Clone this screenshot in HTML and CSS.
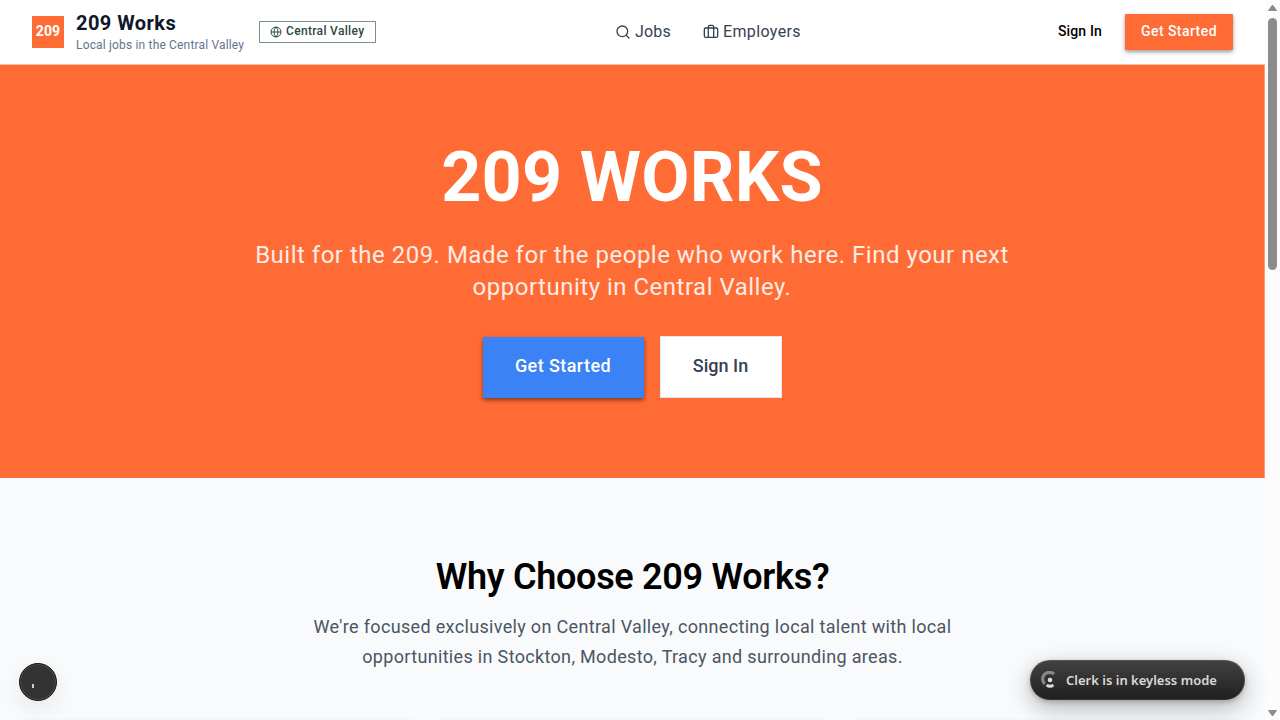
FILE: index.html
```html
<!DOCTYPE html>
<html lang="en">
<head>
<meta charset="utf-8">
<title>209 Works</title>
<link rel="stylesheet" href="styles.css">
</head>
<body>
<div class="page">
  <header class="header">
    <div class="brand">
      <div class="logo">209</div>
      <div class="brand-text">
        <div class="brand-name">209 Works</div>
        <div class="tagline">Local jobs in the Central Valley</div>
      </div>
      <div class="region">
        <svg width="12" height="12" viewBox="0 0 24 24" fill="none" stroke="currentColor" stroke-width="2"><circle cx="12" cy="12" r="10"/><path d="M12 2a14.5 14.5 0 0 0 0 20 14.5 14.5 0 0 0 0-20M2 12h20"/></svg>
        <span>Central Valley</span>
      </div>
    </div>
    <nav class="nav">
      <a class="nav-link jobs"><svg width="16" height="16" viewBox="0 0 24 24" fill="none" stroke="currentColor" stroke-width="2" stroke-linecap="round"><circle cx="11" cy="11" r="8"/><path d="m21 21-4.3-4.3"/></svg><span>Jobs</span></a>
      <a class="nav-link"><svg width="16" height="16" viewBox="0 0 24 24" fill="none" stroke="currentColor" stroke-width="2" stroke-linecap="round" stroke-linejoin="round"><path d="M16 20V4a2 2 0 0 0-2-2h-4a2 2 0 0 0-2 2v16"/><rect width="20" height="14" x="2" y="6" rx="2"/></svg><span>Employers</span></a>
    </nav>
    <div class="actions">
      <a class="sign-in">Sign In</a>
      <a class="start">Get Started</a>
    </div>
  </header>
  <section class="hero">
    <h1>209 WORKS</h1>
    <p>Built for the 209. Made for the people who work here. Find your next opportunity in Central Valley.</p>
    <div class="hero-actions">
      <a class="hero-start">Get Started</a>
      <a class="hero-sign">Sign In</a>
    </div>
  </section>
  <section class="why">
    <h2>Why Choose 209 Works?</h2>
    <p>We're focused exclusively on Central Valley, connecting local talent with local opportunities in Stockton, Modesto, Tracy and surrounding areas.</p>
    <div class="cards"><div class="card"></div><div class="card"></div><div class="card"></div></div>
  </section>
</div>
<div class="scrollbar">
  <svg width="11" height="8" viewBox="0 0 11 8"><path d="M5.5 1 9.5 6.5h-8z" fill="#8b8b8b" stroke="#8b8b8b" stroke-linejoin="round"/></svg>
  <div class="thumb"></div>
  <svg class="down" width="11" height="8" viewBox="0 0 11 8"><path d="M5.5 7 1.5 1.5h8z" fill="#8b8b8b" stroke="#8b8b8b" stroke-linejoin="round"/></svg>
</div>
<div class="devtool"><i class="tick"></i></div>
<div class="clerk">
  <svg width="16" height="18" viewBox="0 0 16 18"><path d="M13 3.1A6.3 6.3 0 0 0 3.8 13" fill="none" stroke="#888" stroke-width="3.2"/><circle cx="9" cy="9" r="2.3" fill="#ddd"/><path d="M4.7 14.9 6.5 13.1q2.5 1.5 5 0l1.8 1.8q-4.3 3.7-8.6 0z" fill="#ddd"/></svg>
  <span>Clerk is in keyless mode</span>
</div>
</body>
</html>
```
FILE: styles.css
```css
* { box-sizing: border-box; }
body { margin: 0; height: 720px; display: flex; overflow: hidden; font-family: Roboto, sans-serif; background: #f9fafb; }
h1, h2, p { margin: 0; }
svg { display: block; flex: none; }
.page { width: 1265px; height: 720px; overflow: hidden; }
.header { height: 65px; padding: 0 32px; display: flex; justify-content: space-between; background: #fff; border-bottom: 1px solid #ffc1aa; }
.brand { display: flex; align-items: center; white-space: nowrap; }
.logo { width: 32px; height: 32px; background: #ff6b35; color: #fff; font-size: 14px; font-weight: 700; line-height: 31px; text-align: center; letter-spacing: .15px; }
.brand-text { width: 168px; margin-left: 12px; padding-bottom: 1px; }
.brand-name { font-size: 20px; font-weight: 700; line-height: 24px; letter-spacing: .45px; color: #0f172a; }
.tagline { font-size: 12px; line-height: 16px; margin-top: 2px; letter-spacing: .17px; color: #64748b; }
.region { margin-left: 15px; width: 117px; height: 22px; padding-left: 10px; display: flex; align-items: center; gap: 4px; border: 1px solid #7b918c; color: #2d4a3e; font-size: 12px; font-weight: 500; letter-spacing: .33px; }
.region span { padding-bottom: 2px; }
.nav { display: flex; align-items: center; gap: 32px; padding-right: 18px; color: #374151; font-size: 16px; letter-spacing: .38px; }
.nav-link { display: flex; align-items: center; gap: 4px; }
.jobs { letter-spacing: .2px; }
.nav-link span { padding-bottom: 1px; }
.actions { display: flex; align-items: center; justify-content: flex-end; gap: 23px; padding-bottom: 1px; font-size: 14px; font-weight: 500; }
.sign-in { letter-spacing: .15px; padding-bottom: 1px; color: #000; }
.start { width: 108px; height: 36px; line-height: 34px; text-align: center; background: #ff6b35; color: #fff; letter-spacing: .43px; border-radius: 1px; box-shadow: 0 2px 4px rgba(0,0,0,.4); }
.hero { height: 413px; padding-top: 81px; display: flex; flex-direction: column; align-items: center; background: #ff6b35; border-right: 1px solid #ff9a75; color: #fff; text-align: center; }
h1 { font-size: 70px; line-height: 62px; font-weight: 700; letter-spacing: .2px; }
.hero p { width: 768px; margin-top: 31px; font-size: 24px; line-height: 32px; letter-spacing: .5px; color: #ffece5; }
.hero-actions { display: flex; gap: 16px; margin-top: 33px; font-size: 18px; font-weight: 500; line-height: 58px; }
.hero-start { width: 161px; height: 61px; margin-top: 1px; background: #3b82f6; letter-spacing: .42px; border-radius: 1px; box-shadow: 0 2px 4px rgba(0,0,0,.5); }
.hero-sign { width: 122px; height: 62px; background: #fff; border: 1px solid #e2e8f0; color: #374151; }
.why { height: 242px; padding-top: 79px; background: #f8fafc; display: flex; flex-direction: column; align-items: center; text-align: center; }
h2 { font-size: 36px; line-height: 40px; font-weight: 600; letter-spacing: -.3px; color: #000; }
.why p { width: 672px; margin-top: 15px; font-size: 18px; line-height: 30px; letter-spacing: .33px; color: #4b5563; }
.cards { width: 1217px; margin-top: 48px; display: grid; grid-template-columns: repeat(3, 1fr); gap: 24px; }
.card { height: 20px; background: #fff; box-shadow: 0 1px 3px rgba(0,0,0,.12); }
.scrollbar { width: 15px; height: 720px; display: flex; flex-direction: column; align-items: center; padding: 4px 0 3px; background: #fcfcfc; }
.thumb { width: 9px; height: 252px; margin-top: 6px; border-radius: 5px; background: #8b8b8b; }
.down { margin-top: auto; }
.devtool { position: absolute; left: 19px; top: 663px; width: 38px; height: 38px; border-radius: 50%; background: #333; border: 1px solid #171717; box-shadow: inset 0 0 0 1px #4c4c4c, 0 8px 24px rgba(0,0,0,.08); }
.tick { display: block; width: 2px; height: 4px; margin: 20px 0 0 12px; background: #ccc; }
.clerk { position: absolute; left: 1030px; top: 660px; width: 215px; height: 40px; padding-left: 11px; display: flex; align-items: center; gap: 9px; border-radius: 20px; background: linear-gradient(#424242, #1f1f1f); box-shadow: inset 0 0 0 1px rgba(255,255,255,.09), 0 8px 24px rgba(0,0,0,.28), 0 2px 5px rgba(0,0,0,.2); color: #d9d9d9; font: 600 13px "Noto Sans", sans-serif; white-space: nowrap; }
```
